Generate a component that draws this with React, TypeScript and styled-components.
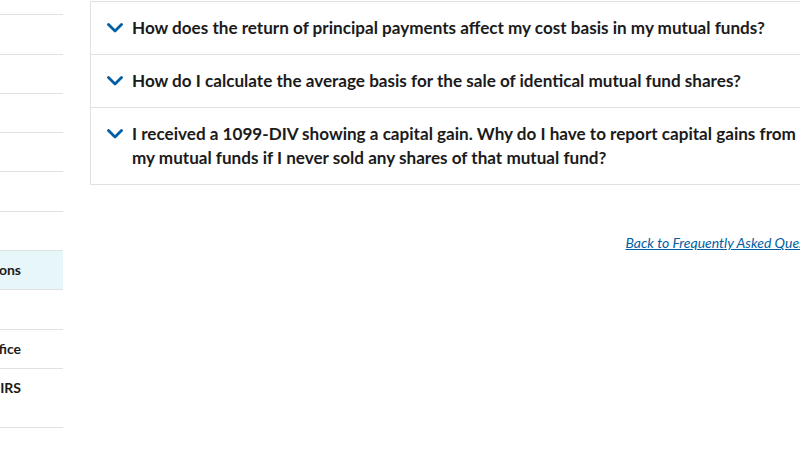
import styled, { createGlobalStyle } from "styled-components";

const GlobalStyle = createGlobalStyle`
  html, body {
    margin: 0;
    padding: 0;
    background: #ffffff;
    overflow: hidden;
  }
  body {
    font-family: Lato, "Noto Sans", sans-serif;
    color: #1b1b1b;
  }
`;

type NavEntry = { lines: string[]; peek?: boolean; active?: boolean };

const navItems: NavEntry[] = [
  { lines: ["Help"] },
  { lines: ["Let Us Help"] },
  { lines: ["Tax Topics"] },
  { lines: ["Tax Trails"] },
  { lines: ["Tax Guide"] },
  { lines: ["Videos"] },
  { lines: ["Tax Help"] },
  { lines: ["Frequently Asked Questions"], peek: true, active: true },
  { lines: ["Options"] },
  { lines: ["Contact Your Local Office"], peek: true },
  { lines: ["Taxpayer Advocate at the IRS", "Home"], peek: true },
];

const questions = [
  "How does the return of principal payments affect my cost basis in my mutual funds?",
  "How do I calculate the average basis for the sale of identical mutual fund shares?",
  "I received a 1099-DIV showing a capital gain. Why do I have to report capital gains from my mutual funds if I never sold any shares of that mutual fund?",
];

const Chevron = () => (
  <svg width="16" height="10" viewBox="0 0 16 10" fill="none">
    <path d="M1.5 1.5 L8 8 L14.5 1.5" stroke="#005ea2" strokeWidth="2.8" strokeLinecap="round" strokeLinejoin="round" />
  </svg>
);

export default function App() {
  return (
    <>
      <GlobalStyle />
      <Page>
        <Sidebar>
          {navItems.map((item) => (
            <NavItem key={item.lines.join(" ")} $active={!!item.active}>
              {item.lines.map((line, i) => (
                <NavLine key={line} $bold={!!item.peek} $right={!!item.peek && i === 0}>
                  {line}
                </NavLine>
              ))}
            </NavItem>
          ))}
        </Sidebar>
        <Main>
          <Accordion>
            {questions.map((q) => (
              <AccordionRow key={q}>
                <ChevronBox>
                  <Chevron />
                </ChevronBox>
                <Question>{q}</Question>
              </AccordionRow>
            ))}
          </Accordion>
          <BackRow>
            <BackLink href="#">Back to Frequently Asked Questions</BackLink>
          </BackRow>
        </Main>
      </Page>
    </>
  );
}

const Page = styled.div`
  display: flex;
  align-items: flex-start;
  width: 900px;
  gap: 27px;
`;

const Sidebar = styled.nav`
  flex: none;
  width: 263px;
  margin-left: -200px;
  margin-top: -24px;
`;

const NavItem = styled.div<{ $active: boolean }>`
  border-bottom: 1px solid #dfe1e2;
  background: ${(p) => (p.$active ? "#e7f6f8" : "transparent")};
  padding: 9.15px 42px 9.15px 8px;
`;

const NavLine = styled.div<{ $bold: boolean; $right: boolean }>`
  font-size: 14px;
  line-height: 20px;
  white-space: nowrap;
  font-weight: ${(p) => (p.$bold ? 700 : 400)};
  text-align: ${(p) => (p.$right ? "right" : "left")};
`;

const Main = styled.main`
  flex: none;
  width: 760px;
  padding-top: 1px;
`;

const Accordion = styled.div`
  border: 1px solid #dfe1e2;
`;

const AccordionRow = styled.div`
  display: flex;
  align-items: flex-start;
  gap: 9px;
  padding: 14px 40px 14px 16px;
  & + & {
    border-top: 1px solid #dfe1e2;
  }
`;

const ChevronBox = styled.div`
  flex: none;
  height: 24px;
  display: flex;
  align-items: center;
`;

const Question = styled.div`
  font-size: 17.1px;
  line-height: 24px;
  font-weight: 700;
  color: #1b1b1b;
`;

const BackRow = styled.div`
  display: flex;
  justify-content: flex-end;
  margin-top: 49px;
  padding-right: 17px;
`;

const BackLink = styled.a`
  font-size: 14px;
  font-style: italic;
  color: #005ea2;
  text-decoration: underline;
`;
